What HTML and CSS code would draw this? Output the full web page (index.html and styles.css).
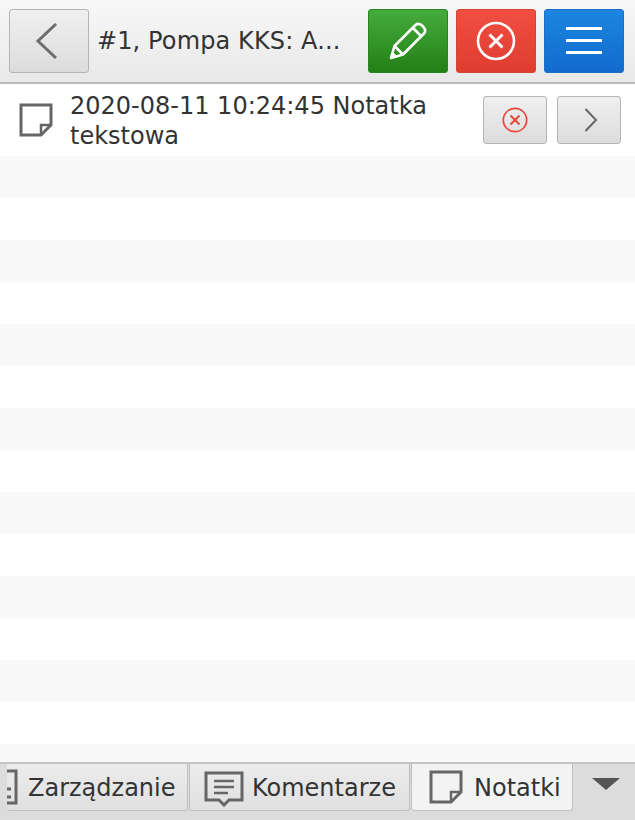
FILE: index.html
```html
<!DOCTYPE html>
<html>
<head>
  <title>Notatki</title>
  <meta charset="utf-8">
  <link rel="stylesheet" href="styles.css">
</head>
<body>
  <div class="topbar">
    <button class="btn big back">
      <svg width="28" height="36" viewBox="0 0 28 36"><path d="M21 1 L3 18 L21 35" fill="none" stroke="#6e6e6e" stroke-width="3"/></svg>
    </button>
    <div class="title">#1, Pompa KKS: A...</div>
    <button class="btn big green">
      <svg width="38" height="38" viewBox="0 0 38 38">
        <g fill="none" stroke="#fff" stroke-width="2.6" stroke-linejoin="round">
          <path d="M2 36 L5.5 24 L26.5 3 Q29.5 0.5 33 3.5 L34.5 5 Q37.5 8.5 35 11.5 L14 32.5 Z"/>
          <path d="M24 6 L32 14"/>
          <path d="M5.5 24 L14 32.5"/>
        </g>
        <path d="M2 36 L3.5 29.5 L8.5 34.5 Z" fill="#fff"/>
      </svg>
    </button>
    <button class="btn big red">
      <svg width="40" height="40" viewBox="0 0 40 40">
        <circle cx="20" cy="20" r="18" fill="none" stroke="#fff" stroke-width="2.6"/>
        <path d="M13.5 13.5 L26.5 26.5 M26.5 13.5 L13.5 26.5" stroke="#fff" stroke-width="3"/>
      </svg>
    </button>
    <button class="btn big blue">
      <svg width="36" height="28" viewBox="0 0 36 28"><path d="M0 1.5 H36 M0 13.5 H36 M0 25.5 H36" stroke="#fff" stroke-width="3"/></svg>
    </button>
  </div>

  <div class="list">
    <div class="item">
      <svg class="note-icon" width="34" height="34" viewBox="0 0 34 34">
        <path d="M2 2 H32 V22 L22 32 H2 Z" fill="none" stroke="#666" stroke-width="3"/>
        <path d="M22 32 V22 H32" fill="none" stroke="#666" stroke-width="2.5"/>
      </svg>
      <div class="item-text">2020-08-11 10:24:45 Notatka tekstowa</div>
      <button class="btn small">
        <svg width="26" height="26" viewBox="0 0 26 26">
          <circle cx="13" cy="13" r="11.7" fill="none" stroke="#e8483c" stroke-width="1.7"/>
          <path d="M8.5 8.5 L17.5 17.5 M17.5 8.5 L8.5 17.5" stroke="#e8483c" stroke-width="2"/>
        </svg>
      </button>
      <button class="btn small">
        <svg class="next" width="14" height="24" viewBox="0 0 14 24"><path d="M1.5 1 L12 12 L1.5 23" fill="none" stroke="#666" stroke-width="2"/></svg>
      </button>
    </div>
    <div class="row odd"></div>
    <div class="row"></div>
    <div class="row odd"></div>
    <div class="row"></div>
    <div class="row odd"></div>
    <div class="row"></div>
    <div class="row odd"></div>
    <div class="row"></div>
    <div class="row odd"></div>
    <div class="row"></div>
    <div class="row odd"></div>
    <div class="row"></div>
    <div class="row odd"></div>
    <div class="row"></div>
    <div class="row odd"></div>
  </div>

  <div class="tabbar">
    <div class="tabs">
      <div class="tab first">
        <svg class="cut-icon" width="11" height="36" viewBox="0 0 11 36">
          <path d="M0 2 H9 V34 H0" fill="none" stroke="#666" stroke-width="3"/>
          <path d="M0 20 H4 M0 28 H4" stroke="#666" stroke-width="3"/>
        </svg>
        <span>Zarządzanie</span>
      </div>
      <div class="tab second">
        <svg class="comment-icon" width="40" height="36" viewBox="0 0 40 36">
          <path d="M2 2 H38 V29 H25 L20 34 L15 29 H2 Z" fill="none" stroke="#666" stroke-width="3"/>
          <path d="M10 10 H30 M10 16 H30 M10 22 H24" stroke="#666" stroke-width="2.4"/>
        </svg>
        <span>Komentarze</span>
      </div>
      <div class="tab active">
        <svg width="34" height="34" viewBox="0 0 34 34">
          <path d="M2 2 H32 V22 L22 32 H2 Z" fill="none" stroke="#666" stroke-width="3"/>
          <path d="M22 32 V22 H32" fill="none" stroke="#666" stroke-width="2.5"/>
        </svg>
        <span>Notatki</span>
      </div>
    </div>
    <div class="more"></div>
  </div>
</body>
</html>
```

FILE: styles.css
```css
html, body {
  margin: 0;
  height: 100%;
}

body {
  display: flex;
  flex-direction: column;
  height: 820px;
  overflow: hidden;
  background-color: #fff;
  font-family: "DejaVu Sans", sans-serif;
  color: #333;
}

/* Top bar */
.topbar {
  display: flex;
  align-items: center;
  flex: none;
  height: 84px;
  padding: 0 11px 0 9px;
  box-sizing: border-box;
  background: linear-gradient(#f8f8f8, #e8e8e8);
  border-bottom: 2px solid #bbb;
}

.title {
  flex: 1;
  margin-left: 8px;
  font-size: 24px;
  letter-spacing: 0.12px;
  white-space: nowrap;
  overflow: hidden;
}

.btn {
  display: flex;
  align-items: center;
  justify-content: center;
  flex: none;
  padding: 0;
  box-sizing: border-box;
  border: 1px solid #b5b5b5;
  border-radius: 3px;
  background: linear-gradient(#f0f0f0, #dcdcdc);
}

.btn.big {
  width: 80px;
  height: 64px;
}

.big.green {
  background: linear-gradient(#45ac3c, #237f16);
  border-color: #2a8420;
}

.big.red {
  margin-left: 8px;
  background: linear-gradient(#f24e42, #df3d30);
  border-color: #d2443a;
}

.big.blue {
  margin-left: 8px;
  background: linear-gradient(#1c86e0, #126bcd);
  border-color: #1a70c8;
}

/* List */
.list {
  flex: 1;
  min-height: 0;
  overflow: hidden;
}

.item {
  display: flex;
  align-items: center;
  height: 72px;
  padding: 0 14px 0 19px;
  box-sizing: border-box;
}

.note-icon {
  flex: none;
}

.item-text {
  flex: 1;
  margin: 0 40px 0 17px;
  padding-top: 2px;
  font-size: 24px;
  line-height: 30px;
}

.btn.small {
  width: 64px;
  height: 48px;
}

.btn.small + .btn.small {
  margin-left: 10px;
}

.next {
  margin-left: 4px;
}

.row {
  height: 42px;
}

.row.odd {
  background-color: #f9f9f9;
}

/* Bottom tabs */
.tabbar {
  display: flex;
  flex: none;
  height: 58px;
  box-sizing: border-box;
  background-color: #dcdcdc;
  border-top: 2px solid #c4c4c4;
}

.tabs {
  display: flex;
  gap: 1px;
  margin-left: 7px;
  width: 566px;
  height: 47px;
  overflow: hidden;
}

.tab {
  display: flex;
  align-items: center;
  gap: 11px;
  flex: none;
  padding: 0 0 0 17px;
  box-sizing: border-box;
  height: 47px;
  font-size: 24px;
  background: linear-gradient(#ececec, #e0e0e0);
  border: 1px solid #c0c0c0;
  border-top: 0;
  border-radius: 0 0 3px 3px;
}

.tab span {
  padding-top: 2px;
}

.tab.first {
  width: 181px;
  padding: 0;
  border-left: 0;
  gap: 10px;
}

.tab.second {
  width: 221px;
  padding-left: 14px;
  gap: 8px;
}

.comment-icon {
  margin-top: 4px;
}

.tab.active {
  width: 162px;
  background: #f3f3f3;
}

.more {
  width: 0;
  height: 0;
  margin: 14px 0 0 19px;
  border-left: 14px solid transparent;
  border-right: 14px solid transparent;
  border-top: 12px solid #555;
}
```
